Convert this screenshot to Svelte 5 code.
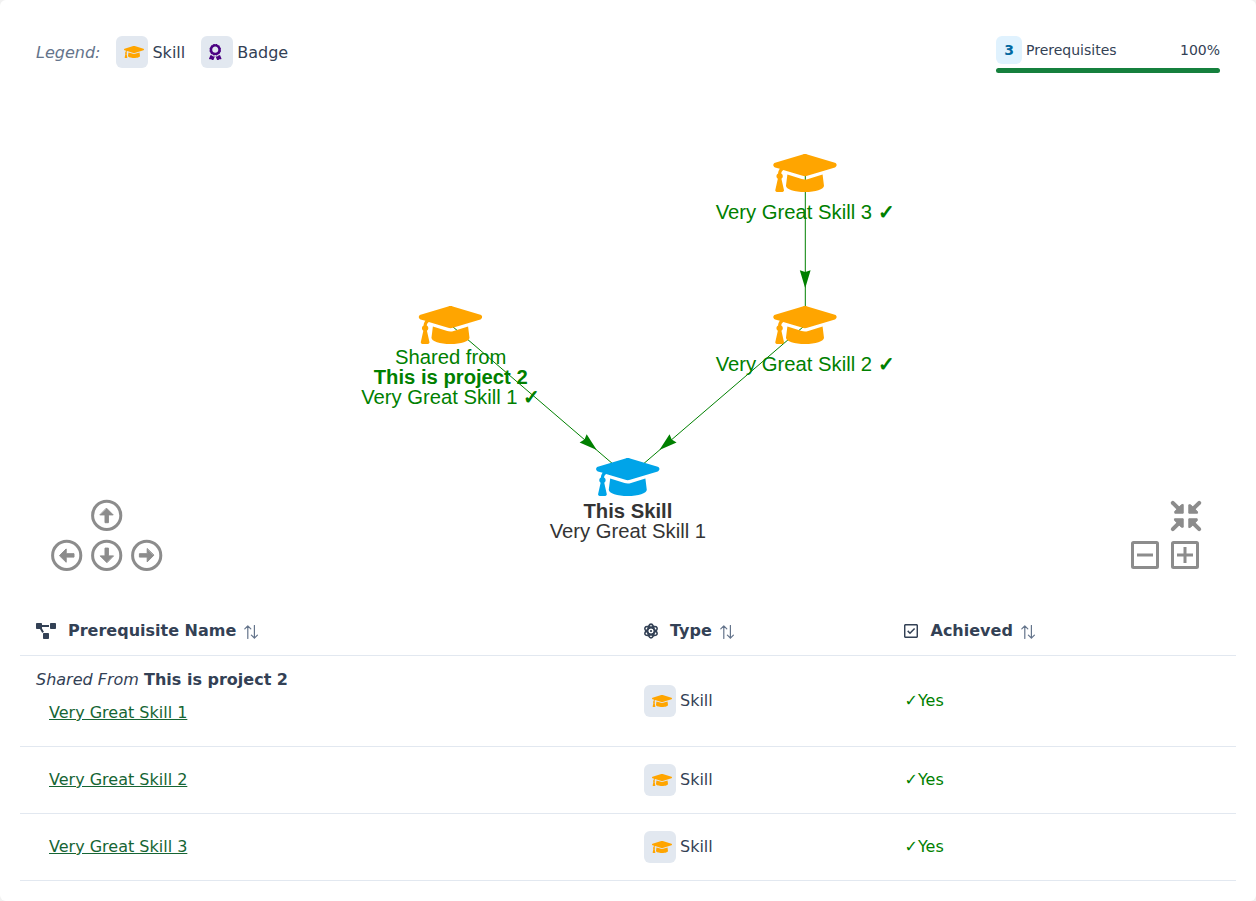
<script>
  const cap = 'M622.34 153.2L343.4 67.5c-15.2-4.67-31.6-4.67-46.79 0L17.66 153.2c-23.54 7.23-23.54 38.36 0 45.59l48.63 14.94c-10.67 13.19-17.23 29.28-17.88 46.9C38.78 266.15 32 276.11 32 288c0 10.78 5.68 19.85 13.86 25.65L20.33 428.53C18.11 438.52 25.71 448 35.94 448h56.11c10.24 0 17.84-9.48 15.62-19.47L82.14 313.65C90.32 307.85 96 298.78 96 288c0-11.57-6.47-21.25-15.66-26.87.76-15.02 8.44-28.3 20.69-36.72L296.6 284.5c9.06 2.78 26.44 6.25 46.79 0l278.95-85.7c23.55-7.24 23.55-38.36 0-45.6zM352.79 315.09c-28.53 8.76-52.84 3.92-65.59 0l-145.02-44.55L128 384c0 35.35 85.96 64 192 64s192-28.65 192-64l-14.18-113.47-145.03 44.56z';
  const award = 'M97.12 362.63c-8.69-8.69-4.16-6.24-25.12-11.85-9.51-2.55-17.87-7.45-25.43-13.32L1.2 448.7c-4.39 10.77 3.81 22.47 15.43 22.03l52.69-2.01L105.56 507c8 8.44 22.04 5.81 26.43-4.96l52.05-127.62c-10.84 6.04-22.87 9.58-35.31 9.58-19.5 0-37.82-7.59-51.61-21.37zM382.8 448.7l-45.37-111.24c-7.56 5.88-15.92 10.77-25.43 13.32-21.07 5.64-16.45 3.18-25.12 11.85-13.79 13.78-32.12 21.37-51.62 21.37-12.44 0-24.47-3.55-35.31-9.58L252 502.04c4.39 10.77 18.44 13.4 26.43 4.96l36.25-38.28 52.69 2.01c11.62.44 19.82-11.27 15.43-22.03zM263 340c15.28-15.55 17.03-14.21 38.79-20.14 13.89-3.79 24.75-14.84 28.47-28.98 7.48-28.4 5.54-24.97 25.95-45.75 10.17-10.35 14.14-25.44 10.42-39.58-7.47-28.38-7.48-24.42 0-52.83 3.72-14.14-.25-29.23-10.42-39.58-20.41-20.78-18.47-17.36-25.95-45.75-3.72-14.14-14.58-25.19-28.47-28.98-27.88-7.61-24.52-5.62-44.95-26.41-10.17-10.35-25-14.4-38.89-10.61-27.87 7.6-23.98 7.61-51.9 0-13.89-3.79-28.72.25-38.89 10.61-20.41 20.78-17.05 18.8-44.94 26.41-13.89 3.79-24.75 14.84-28.47 28.98-7.47 28.39-5.54 24.97-25.95 45.75-10.17 10.35-14.15 25.44-10.42 39.58 7.47 28.36 7.48 24.4 0 52.82-3.72 14.14.25 29.23 10.42 39.59 20.41 20.78 18.47 17.35 25.95 45.75 3.72 14.14 14.58 25.19 28.47 28.98C104.6 325.96 106.27 325 121 340c13.23 13.47 33.84 15.88 49.74 5.82a39.676 39.676 0 0 1 42.53 0c15.89 10.06 36.5 7.65 49.73-5.82zM97.66 175.96c0-53.03 42.24-96.02 94.34-96.02s94.34 42.99 94.34 96.02-42.24 96.02-94.34 96.02-94.34-42.99-94.34-96.02z';
  const diagram = 'M384 320H256c-17.67 0-32 14.33-32 32v128c0 17.67 14.33 32 32 32h128c17.67 0 32-14.33 32-32V352c0-17.67-14.33-32-32-32zM192 32c0-17.67-14.33-32-32-32H32C14.33 0 0 14.33 0 32v128c0 17.67 14.33 32 32 32h95.72l73.16 128.04C211.98 300.98 232.4 288 256 288h.28L192 175.51V128h224V64H192V32zM608 0H480c-17.67 0-32 14.33-32 32v128c0 17.67 14.33 32 32 32h128c17.67 0 32-14.33 32-32V32c0-17.67-14.33-32-32-32z';

  // Graph coordinates are relative to the canvas, which starts below the header.
  const nodes = [
    { x: 805, y: 69, color: '#ffa500' },
    { x: 805, y: 221, color: '#ffa500' },
    { x: 450.5, y: 221, color: '#ffa500' },
    { x: 627.8, y: 373, color: '#00a4e8' }
  ];
  const edges = [
    { from: nodes[0], to: nodes[1], tip: [805.2, 184.3], angle: 90 },
    { from: nodes[1], to: nodes[3], tip: [659.4, 346], angle: 139.4 },
    { from: nodes[2], to: nodes[3], tip: [596.8, 346], angle: 40.6 }
  ];
  const arrows = [
    { x: 106.7, y: 411.4, turn: 0, label: 'Up' },
    { x: 66.7, y: 451.4, turn: -90, label: 'Left' },
    { x: 106.7, y: 451.4, turn: 180, label: 'Down' },
    { x: 146.7, y: 451.4, turn: 90, label: 'Right' }
  ];
  const rows = [
    { name: 'Very Great Skill 1', project: 'This is project 2' },
    { name: 'Very Great Skill 2' },
    { name: 'Very Great Skill 3' }
  ];
</script>

{#snippet skillIcon()}
  <span class="tile"><svg class="cap" viewBox="0 0 640 512"><path d={cap} /></svg></span>
{/snippet}

{#snippet sortIcon()}
  <svg class="sort" viewBox="0 0 14 14"><path d="M3.8 13.5V.8M.8 3.8l3-3 3 3M10.4.5v12.7M7.4 10.2l3 3 3-3" /></svg>
{/snippet}

<main>
  <header>
    <div class="legend">
      <em>Legend:</em>
      <span class="item">{@render skillIcon()}<span class="name">Skill</span></span>
      <span class="item"><span class="tile"><svg class="award" viewBox="0 0 384 512"><path d={award} /></svg></span><span class="name">Badge</span></span>
    </div>
    <div class="progress">
      <div class="summary"><b>3</b><span>Prerequisites</span><span class="percent">100%</span></div>
      <div class="bar"></div>
    </div>
  </header>

  <svg class="graph" width="1256" height="501" viewBox="0 0 1256 501">
    {#each edges as e}
      <line x1={e.from.x + 0.3} y1={e.from.y} x2={e.to.x + 0.3} y2={e.to.y} stroke="#008000" stroke-width="1" />
      <path d="M0 0L-18-5.4L-16.2 0L-18 5.4Z" fill="#008000" transform="translate({e.tip[0]} {e.tip[1]}) rotate({e.angle})" />
    {/each}
    {#each nodes as n}
      <path d={cap} fill={n.color} transform="translate({n.x - 31.7} {n.y - 25.3}) scale(.099)" />
    {/each}
    <g class="labels">
      <text x="715.7" y="115">Very Great Skill 3 <tspan font-weight="bold">✓</tspan></text>
      <text x="715.7" y="267">Very Great Skill 2 <tspan font-weight="bold">✓</tspan></text>
      <text x="395" y="260">Shared from</text>
      <text x="373.7" y="280" font-weight="bold">This is project 2</text>
      <text x="361.2" y="300">Very Great Skill 1 <tspan font-weight="bold">✓</tspan></text>
      <text class="dark" x="583.5" y="414" font-weight="bold">This Skill</text>
      <text class="dark" x="549.7" y="434">Very Great Skill 1</text>
    </g>
    <g class="controls">
      {#each arrows as a}
        <g role="button" tabindex="-1" aria-label={a.label} transform="translate({a.x} {a.y}) rotate({a.turn})">
          <circle r="14.1" />
          <path class="solid" d="M0-7L6.5-.5H1.7V7.3H-1.7V-.5H-6.5Z" />
        </g>
      {/each}
      <g transform="translate(1186 412)">
        {#each [0, 90, 180, 270] as turn}
          <g transform="rotate({turn})">
            <path d="M-13.2-13.2L-6-6" stroke-width="4" />
            <path class="solid" d="M-2.8-11.2V-2.8H-11.2V-4.6L-4.6-11.2Z" />
          </g>
        {/each}
      </g>
      <rect x="1132.5" y="438.5" width="25" height="25" rx="1" />
      <path class="sign" d="M1137 451H1153" />
      <rect x="1172.5" y="438.5" width="25" height="25" rx="1" />
      <path class="sign" d="M1177 451H1193M1185 443V459" />
    </g>
  </svg>

  <table>
    <thead>
      <tr>
        <th><div class="head"><svg class="diagram" viewBox="0 0 640 512"><path d={diagram} /></svg><span class="name">Prerequisite Name</span>{@render sortIcon()}</div></th>
        <th><div class="head"><svg class="atom" viewBox="0 0 14 16">
          {#each [0, 60, 120] as turn}<ellipse cx="7" cy="8" rx="3.2" ry="6.9" transform="rotate({turn} 7 8)" />{/each}
          <circle class="ring" cx="7" cy="8" r="2.3" />
          <circle class="core" cx="7" cy="8" r="1.1" />
        </svg><span class="name">Type</span>{@render sortIcon()}</div></th>
        <th><div class="head achieved"><svg class="check" viewBox="0 0 14 14"><rect x=".7" y=".7" width="12.6" height="12.6" rx="1" /><path d="M3.7 6.9L6 9.2L10.6 4.4" /></svg><span class="name">Achieved</span>{@render sortIcon()}</div></th>
      </tr>
    </thead>
    <tbody>
      {#each rows as row}
        <tr class:shared={row.project}>
          <td>
            {#if row.project}<div class="from"><em>Shared From</em> <b>{row.project}</b></div>{/if}
            <a href="#skill">{row.name}</a>
          </td>
          <td><span class="item">{@render skillIcon()}Skill</span></td>
          <td class="yes">✓Yes</td>
        </tr>
      {/each}
    </tbody>
  </table>
</main>

<style>
  :global(body) { margin: 0; background: #f1f1f1; }
  main { box-sizing: border-box; height: 901px; overflow: hidden; border-radius: 6px; background: #fff; color: #334155; font: 16px/24px "DejaVu Sans", sans-serif; }
  header { box-sizing: border-box; height: 104px; padding: 36px 36px 0; display: flex; justify-content: space-between; align-items: flex-start; }
  .legend { display: flex; align-items: center; gap: 16px; }
  .legend em { color: #64748b; padding-top: 2px; }
  .name { padding-top: 2px; }
  .item { display: flex; align-items: center; gap: 4px; }
  .tile { box-sizing: border-box; width: 32px; height: 32px; border-radius: 6px; background: #e2e8f0; display: flex; align-items: center; padding-left: 8px; }
  .cap { width: 20px; height: 16px; fill: #ffa500; }
  .award { width: 12.5px; height: 16.6px; fill: #4b0082; }
  .progress { width: 224px; }
  .summary { display: flex; align-items: center; gap: 4px; font-size: 14px; line-height: 28px; }
  .summary b { width: 26px; height: 28px; border-radius: 6px; background: #e0f2fe; color: #0369a1; text-align: center; }
  .percent { margin-left: auto; }
  .bar { height: 5px; margin-top: 4px; border-radius: 3px; background: #15803d; }
  .graph { display: block; }
  .labels { font: 20.24px "Liberation Sans", sans-serif; fill: #008000; }
  .dark { fill: #343434; }
  .controls { fill: none; stroke: #8c8c8c; stroke-width: 3; stroke-linecap: round; }
  .solid { fill: #8c8c8c; stroke-width: 1; stroke-linejoin: round; }
  .sign { stroke-linecap: butt; }
  table { width: 1216px; margin: 0 20px; border-collapse: separate; border-spacing: 0; table-layout: fixed; }
  th, td { box-sizing: border-box; padding: 0 16px; border-bottom: 1px solid #e2e8f0; text-align: left; }
  th { height: 51px; font-weight: 700; }
  th:nth-child(1) { width: 608px; }
  th:nth-child(2) { width: 260px; }
  td { height: 67px; }
  .shared td { height: 91px; }
  .head { display: flex; align-items: center; }
  .achieved { padding-left: 0.5px; }
  .diagram { width: 20px; height: 16px; fill: #334155; margin: 2px 12px 0 0; }
  .atom { width: 14px; height: 16px; overflow: visible; fill: none; stroke: #334155; stroke-width: 1.6; margin: 2px 12px 0 0; }
  .ring { fill: #fff; stroke: none; }
  .core { fill: #334155; stroke: none; }
  .check { width: 14px; height: 14px; fill: none; stroke: #334155; stroke-width: 1.5; margin: 2px 12.5px 0 -0.5px; }
  .sort { width: 14px; height: 14px; margin: 3px 0 0 8px; fill: none; stroke: #64748b; stroke-width: 1.2; stroke-linecap: round; stroke-linejoin: round; }
  .from { margin-bottom: 9px; }
  .shared td:first-child { padding-bottom: 9px; }
  a { margin-left: 13px; color: #166534; text-decoration: underline; }
  .yes { color: #008000; padding-left: 16.5px; }
</style>
